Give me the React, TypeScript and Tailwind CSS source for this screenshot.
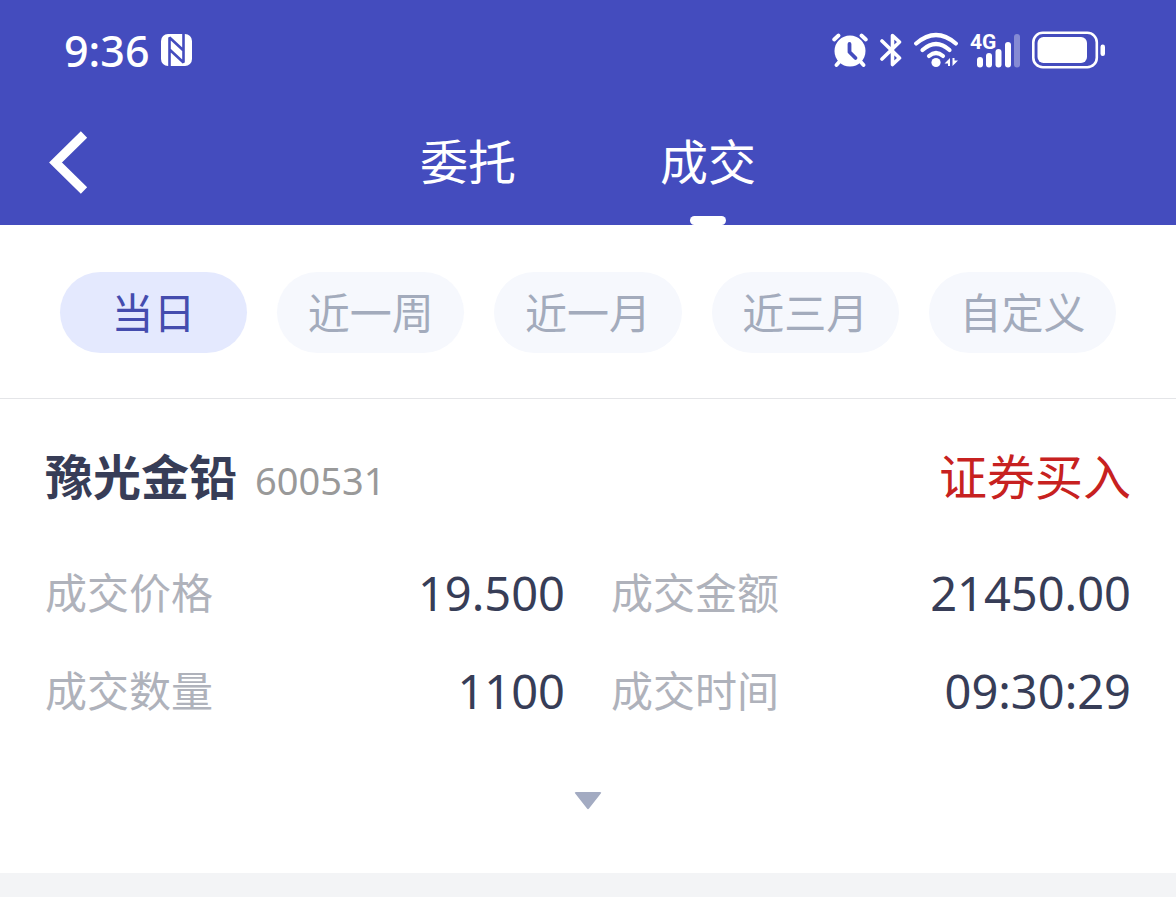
import { useState } from "react";

const ranges = ["当日", "近一周", "近一月", "近三月", "自定义"];
const tabs = ["委托", "成交"];

const details = [
  { label: "成交价格", value: "19.500" },
  { label: "成交金额", value: "21450.00" },
  { label: "成交数量", value: "1100" },
  { label: "成交时间", value: "09:30:29" },
];

function NfcIcon() {
  return (
    <svg className="h-8 w-8" viewBox="0 0 32 32" fill="none" aria-hidden="true">
      <rect x="0" y="0" width="31" height="32" rx="7" fill="currentColor" />
      <path d="M8.500 32V3.500L22.500 16.500V0M22.500 15V28.500L8.500 15.500" stroke="#444cbe" strokeWidth="2.600" strokeLinejoin="bevel" />
    </svg>
  );
}

function AlarmIcon() {
  return (
    <svg className="h-9 w-9" viewBox="0 0 36 36" fill="none" strokeLinecap="round" aria-hidden="true">
      <circle cx="18" cy="19" r="15.500" fill="currentColor" />
      <path d="M2.200 7.500L6.500 3.500M33.800 7.500L29.500 3.500M8 29L4.500 33M28 29L31.500 33" stroke="currentColor" strokeWidth="3.800" />
      <path d="M17.500 12V20L23.500 26" stroke="#444cbe" strokeWidth="3.800" strokeLinejoin="round" />
    </svg>
  );
}

function BluetoothIcon() {
  return (
    <svg className="h-9 w-[22px]" viewBox="1 0 22 36" fill="none" stroke="currentColor" strokeWidth="3.600" strokeLinecap="round" strokeLinejoin="round" aria-hidden="true">
      <path d="M3 9L20.500 26L13.500 32.500V3.500L20.500 10L3 27" />
    </svg>
  );
}

function WifiIcon() {
  return (
    <svg className="h-9 w-11" viewBox="0 0 44 36" fill="none" stroke="currentColor" strokeWidth="4.200" strokeLinecap="round" aria-hidden="true">
      <path d="M2.200 11.500Q22 -5.500 41.800 11.500" />
      <path d="M8.500 18Q22 6 35.500 18" />
      <path d="M15 24Q22 18 29 24" />
      <circle cx="22" cy="30.500" r="4.600" fill="currentColor" stroke="none" />
      <path d="M36 26V34H34V31.500H30.500ZM38.500 34V26H40.500V28.500H44Z" fill="currentColor" stroke="none" />
    </svg>
  );
}

function SignalIcon() {
  return (
    <svg className="h-12 w-[50px]" viewBox="0 -6 50 48" fill="currentColor" aria-hidden="true">
      <text x="0" y="17" fontSize="21" fontWeight="700" fontFamily="'Liberation Sans Narrow', Roboto, sans-serif">4G</text>
      <rect x="7" y="25" width="6" height="10.500" rx="3" />
      <rect x="16" y="21" width="6" height="14.500" rx="3" />
      <rect x="25.500" y="17" width="6" height="18.500" rx="3" />
      <rect x="35" y="10" width="6" height="25.500" rx="3" />
      <rect x="44" y="2" width="6" height="33.500" rx="3" opacity="0.350" />
    </svg>
  );
}

function BatteryIcon() {
  return (
    <svg className="h-[38px] w-[74px]" viewBox="0 0 74 38" aria-hidden="true">
      <rect x="1.300" y="1.800" width="63.500" height="34.400" rx="9.500" fill="none" stroke="currentColor" strokeWidth="2.600" />
      <rect x="5.500" y="6" width="49.500" height="26" rx="6" fill="currentColor" />
      <rect x="68.500" y="13.500" width="4.500" height="11.500" rx="2.200" fill="currentColor" />
    </svg>
  );
}

export default function App() {
  const [tab, setTab] = useState("成交");
  const [range, setRange] = useState("当日");

  return (
    <div className="min-h-screen bg-white font-['Noto_Sans','Noto_Sans_CJK_SC',sans-serif] text-[#373d57]">
      <header className="bg-[#444cbe] text-white">
        <div className="flex h-[100px] items-center justify-between pr-[70px] pl-16">
          <div className="flex items-center gap-3">
            <time className="text-[43px] leading-none font-medium">9:36</time>
            <NfcIcon />
          </div>
          <div className="flex items-center gap-3">
            <AlarmIcon />
            <BluetoothIcon />
            <WifiIcon />
            <SignalIcon />
            <BatteryIcon />
          </div>
        </div>
        <nav className="grid h-[125px] grid-cols-[1fr_auto_1fr] items-stretch">
          <button type="button" aria-label="返回" className="flex items-center justify-self-start pl-12">
            <svg className="h-16 w-10" viewBox="0 0 40 64" fill="none" stroke="currentColor" strokeWidth="9" aria-hidden="true">
              <path d="M36 3.500L7.500 31.500L36 59.500" />
            </svg>
          </button>
          <div className="flex">
            {tabs.map((name) => (
              <button
                key={name}
                type="button"
                aria-pressed={tab === name}
                onClick={() => setTab(name)}
                className="flex w-60 flex-col items-center justify-between pt-[26px] text-5xl"
              >
                <span className="leading-[72px]">{name}</span>
                <span className={tab === name ? "h-[9px] w-9 rounded-full bg-white" : "h-[9px] w-9"} />
              </button>
            ))}
          </div>
        </nav>
      </header>

      <main>
        <div className="grid grid-cols-5 gap-[30px] border-b border-[#e4e5e8] px-[60px] pt-[47px] pb-[45px]">
          {ranges.map((name) => (
            <button
              key={name}
              type="button"
              aria-pressed={range === name}
              onClick={() => setRange(name)}
              className={
                range === name
                  ? "h-[81px] rounded-full bg-[#e4e9fe] text-[42px] leading-none text-[#444cae]"
                  : "h-[81px] rounded-full bg-[#f6f8fd] text-[42px] leading-none text-[#a3abbc]"
              }
            >
              {name}
            </button>
          ))}
        </div>

        <article className="px-[45px] pt-[42px] pb-[39px]">
          <div className="flex items-baseline justify-between">
            <div className="flex items-baseline gap-[18px]">
              <h2 className="text-5xl leading-[72px] font-bold">豫光金铅</h2>
              <span className="text-[38px] leading-[72px] text-[#999999]">600531</span>
            </div>
            <span className="text-5xl leading-[72px] text-[#c72120]">证券买入</span>
          </div>
          <dl className="mt-7 grid grid-cols-2 gap-x-[46px]">
            {details.map((item) => (
              <div key={item.label} className="flex h-[98px] items-center justify-between">
                <dt className="text-[42px] leading-none text-[#afb2bb]">{item.label}</dt>
                <dd className="text-[47px] leading-none">{item.value}</dd>
              </div>
            ))}
          </dl>
          <button type="button" aria-label="展开" className="mx-auto mt-7 flex h-[66px] w-20 items-center justify-center">
            <svg className="h-[18px] w-7" viewBox="0 0 28 18" fill="#a3abc2" aria-hidden="true">
              <path d="M2 0H26Q28 0 26.800 1.500L15 16.500Q14 17.800 13 16.500L1.200 1.500Q0 0 2 0Z" />
            </svg>
          </button>
        </article>
        <div className="h-6 bg-[#f3f4f6]" />
      </main>
    </div>
  );
}
